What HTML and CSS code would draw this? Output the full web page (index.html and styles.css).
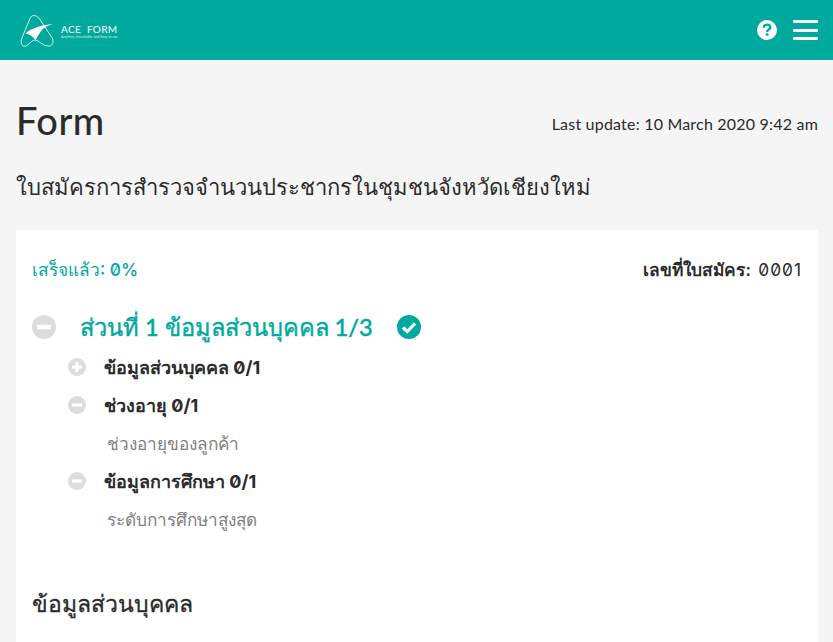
FILE: index.html
```html
<!DOCTYPE html>
<html lang="th">
<head>
<meta charset="utf-8">
<title>Form</title>
<link rel="stylesheet" href="styles.css">
</head>
<body>
<header class="topbar">
  <div class="brand">
    <svg class="logo" width="35" height="34" viewBox="-0.5 -0.5 35 34" fill="none">
      <path d="M1.700 22.700 L10 2.700 Q13.300 -1 18.300 3.300 L32 24 Q34 30 29 31.700 Q24 32 19 27.700 Q15 24 11 27 Q6 32.500 3 32 Q-1 29 1.700 22.700 Z" stroke="#fff" stroke-width="0.8"/>
      <path d="M5 18.700 Q12 12 32.700 9.300 Q25 12 21.700 15 Q18 20 15 25.500 Q12 21 5 18.700 Z" fill="#fff"/>
    </svg>
    <div class="brand-text">
      <span class="brand-name">ACE&nbsp; FORM</span>
      <span class="brand-tag">Anytime, Inventable and Easy to use</span>
    </div>
  </div>
  <div class="top-actions">
    <svg class="help" width="20" height="20" viewBox="0 0 20 20">
      <circle cx="10" cy="10" r="10" fill="#fff"/>
      <path d="M6.800 7.800 Q7 4.700 10.200 4.700 Q13.300 4.700 13.300 7.300 Q13.300 8.800 11.500 9.800 Q10.200 10.500 10.200 12" fill="none" stroke="#00a99d" stroke-width="2.300"/>
      <rect x="8.900" y="13.300" width="2.600" height="2.500" rx=".5" fill="#00a99d"/>
    </svg>
    <div class="burger"><span></span><span></span><span></span></div>
  </div>
</header>
<main class="page">
  <div class="title-row">
    <h1>Form</h1>
    <p class="updated">Last update: 10 March 2020 9:42 am</p>
  </div>
  <h2 class="form-name">ใบสมัครการสำรวจจำนวนประชากรในชุมชนจังหวัดเชียงใหม่</h2>
  <section class="card">
    <div class="meta">
      <span class="progress">เสร็จแล้ว: 0%</span>
      <span class="number">เลขที่ใบสมัคร: <span class="num-val">0001</span></span>
    </div>
    <div class="part">
      <svg class="ico-lg" viewBox="0 0 24 24"><circle cx="12" cy="12" r="12" fill="#ddd"/><rect x="5" y="9.800" width="14" height="4.400" rx="1" fill="#fff"/></svg>
      <span class="part-title">ส่วนที่ 1 ข้อมูลส่วนบุคคล 1/3</span>
      <svg class="ico-lg" viewBox="0 0 24 24"><circle cx="12" cy="12" r="12" fill="#00a99d"/><path d="M6 12.500 L10.200 16.500 L18 8.500" fill="none" stroke="#fff" stroke-width="3.200"/></svg>
    </div>
    <ul class="tree">
      <li class="sec">
        <svg class="ico-sm" viewBox="0 0 18 18"><circle cx="9" cy="9" r="9" fill="#ddd"/><path d="M4 9 H14 M9 4 V14" stroke="#fff" stroke-width="3.200"/></svg>
        <span>ข้อมูลส่วนบุคคล 0/1</span>
      </li>
      <li class="sec">
        <svg class="ico-sm" viewBox="0 0 18 18"><circle cx="9" cy="9" r="9" fill="#ddd"/><path d="M4 9 H14" stroke="#fff" stroke-width="3.200"/></svg>
        <span>ช่วงอายุ 0/1</span>
      </li>
      <li class="leaf">ช่วงอายุของลูกค้า</li>
      <li class="sec">
        <svg class="ico-sm" viewBox="0 0 18 18"><circle cx="9" cy="9" r="9" fill="#ddd"/><path d="M4 9 H14" stroke="#fff" stroke-width="3.200"/></svg>
        <span>ข้อมูลการศึกษา 0/1</span>
      </li>
      <li class="leaf">ระดับการศึกษาสูงสุด</li>
    </ul>
    <h3 class="section-title">ข้อมูลส่วนบุคคล</h3>
  </section>
</main>
</body>
</html>
```
FILE: styles.css
```css
* { box-sizing: border-box; }
html, body { margin: 0; height: 100%; overflow: hidden; }
body {
  background: #f5f5f5;
  color: #2b2b2b;
  font-family: "Lato", "Noto Sans", "DejaVu Sans", sans-serif;
}
.topbar {
  height: 60px;
  background: #00a99d;
  display: flex;
  align-items: center;
  justify-content: space-between;
  padding: 0 15px 0 20px;
}
.brand { display: flex; align-items: center; gap: 6px; margin-top: 1px; }
.logo { display: block; }
.brand-text { display: flex; flex-direction: column; color: #fff; margin-top: 3px; }
.brand-name { font-size: 10px; line-height: 10px; letter-spacing: .35px; }
.brand-tag { font-size: 3.600px; line-height: 6px; opacity: .8; white-space: nowrap; }
.top-actions { display: flex; align-items: center; gap: 16px; }
.help { display: block; }
.burger { width: 25px; display: flex; flex-direction: column; gap: 5.500px; }
.burger span { display: block; height: 3px; background: #fff; border-radius: 1px; }
.page { padding: 38px 15px 0 16px; }
.title-row { display: flex; justify-content: space-between; align-items: center; height: 48px; }
h1 { margin: -4px 0 0; font-size: 38px; font-weight: 500; line-height: 48px; letter-spacing: .5px; }
.updated { margin: 2px 0 0; font-size: 16px; letter-spacing: .2px; }
.form-name { margin: 23px 0 0; font-size: 22px; line-height: 36px; font-weight: 400; }
.card { background: #fff; margin-top: 25px; padding: 24px 16px 0; height: 420px; }
.meta { display: flex; justify-content: space-between; align-items: center; height: 32px; font-family: "Inter", "DejaVu Sans", sans-serif; font-size: 17.300px; font-variant-numeric: slashed-zero; }
.progress { color: #00a99d; font-weight: 500; }
.number { font-weight: 600; }
.num-val { font-weight: 400; letter-spacing: 1px; margin-left: 3px; }
.part { display: flex; align-items: center; margin-top: 25px; height: 32px; }
.ico-lg { width: 24px; height: 24px; display: block; flex: none; }
.part-title { color: #00a99d; font-size: 23.600px; font-weight: 500; -webkit-text-stroke: .4px #00a99d; margin: 0 24px; white-space: nowrap; }
.tree { list-style: none; margin: 5px 0 0; padding: 0 0 0 36px; }
.sec { display: flex; align-items: center; height: 38px; font-family: "Inter", "DejaVu Sans", sans-serif; font-size: 18px; font-weight: 700; font-variant-numeric: slashed-zero; }
.ico-sm { width: 18px; height: 18px; display: block; flex: none; margin-right: 18px; }
.leaf { height: 38px; line-height: 40px; padding-left: 39px; font-size: 17.200px; color: #808080; }
.section-title { margin: 49px 0 0; font-size: 23px; line-height: 32px; font-weight: 500; -webkit-text-stroke: .3px #2b2b2b; }
```
